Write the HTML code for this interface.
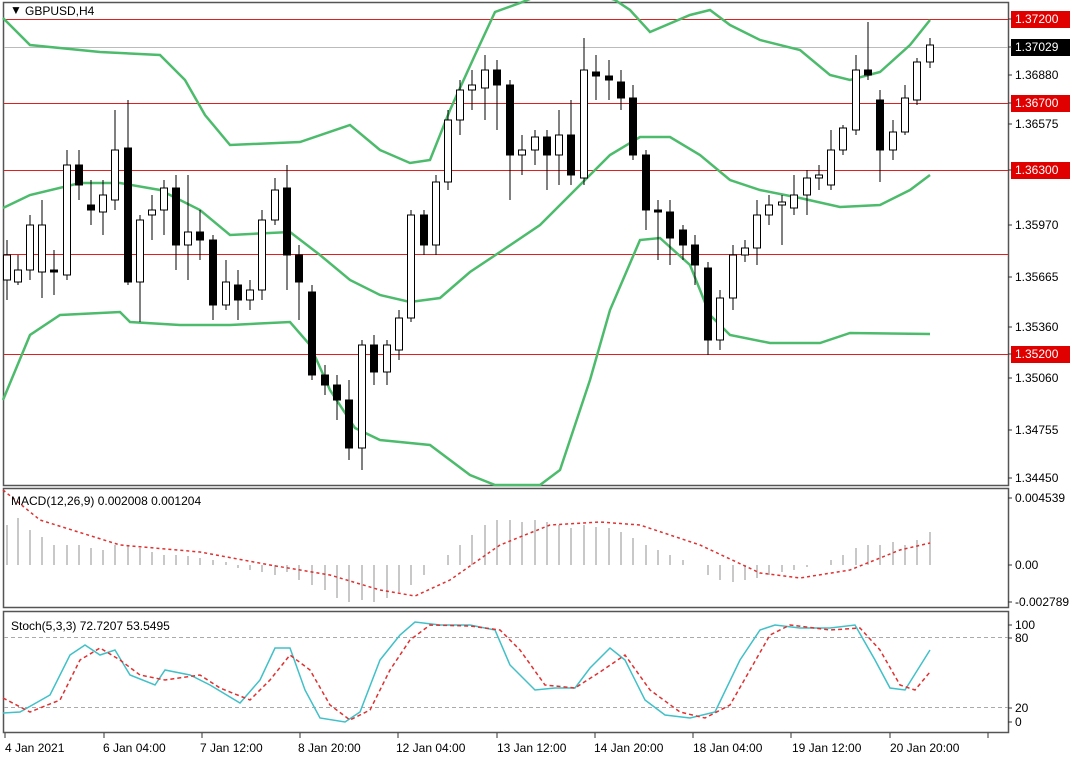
<!DOCTYPE html>
<html><head><meta charset="utf-8"><style>
html,body{margin:0;padding:0;background:#fff;width:1079px;height:762px;overflow:hidden}
svg text{font-family:"Liberation Sans",sans-serif;font-size:12px}
</style></head><body>
<svg id="s" width="1079" height="762" xmlns="http://www.w3.org/2000/svg">
<rect x="0" y="0" width="1079" height="762" fill="#fff"/>
<!-- panels -->
<rect x="3.5" y="2.5" width="1005" height="483" fill="none" stroke="#555" stroke-width="1.5"/>
<rect x="3.5" y="488.5" width="1005" height="119" fill="none" stroke="#555" stroke-width="1.5"/>
<rect x="3.5" y="611.5" width="1005" height="121" fill="none" stroke="#555" stroke-width="1.5"/>
<!-- hlines -->
<g stroke="#e02020" stroke-width="1">
<line x1="4" y1="19.5" x2="1008" y2="19.5"/><line x1="4" y1="103.5" x2="1008" y2="103.5"/>
<line x1="4" y1="170.5" x2="1008" y2="170.5"/><line x1="4" y1="254.5" x2="1008" y2="254.5"/>
<line x1="4" y1="354.5" x2="1008" y2="354.5"/></g>
<line x1="4" y1="47.5" x2="1008" y2="47.5" stroke="#bbb"/>
<g stroke="#aaa" stroke-dasharray="4,3"><line x1="4" y1="637.5" x2="1008" y2="637.5"/><line x1="4" y1="707.5" x2="1008" y2="707.5"/></g>
<g id="bb" fill="none" stroke="#4cbb6c" stroke-width="2.5">
<polyline points="3,18 30,45 100,52 160,55 185,80 205,115 230,145 300,142 350,125 380,150 410,163 430,160 450,110 475,55 495,12 520,3 540,-5 600,-5 615,0 630,10 650,32 690,15 710,10 730,25 760,40 800,50 830,75 850,80 880,72 910,45 930,20"/>
<polyline points="3,208 30,195 80,183 120,183 160,190 200,210 230,235 290,232 320,255 350,280 380,295 410,302 440,298 470,272 500,252 540,225 580,185 610,155 640,137 670,137 700,155 730,180 760,190 800,198 840,207 880,205 910,190 930,175"/>
<polyline points="3,400 30,335 60,315 120,312 130,322 180,325 230,325 290,322 310,345 330,390 355,428 380,440 430,445 470,475 495,485 540,485 560,470 590,380 610,310 640,240 660,238 690,265 710,315 730,335 770,343 820,343 850,333 930,334"/>
</g>
<g id="candles"></g>
<g id="hist" stroke="#c8c8c8" stroke-width="2"></g>
<polyline fill="none" stroke="#e03030" stroke-width="1.5" stroke-dasharray="3,3" points="3,490 40,520 120,545 200,552 270,565 330,575 380,590 415,596 450,580 500,545 550,525 600,522 640,525 700,545 760,573 800,578 850,570 900,550 930,543"/>
<polyline fill="none" stroke="#40c0c8" stroke-width="1.5" points="3,713 20,712 50,695 70,655 85,645 100,655 115,650 130,675 155,685 165,670 190,675 210,685 240,703 260,680 275,648 290,648 305,690 320,718 345,722 360,712 380,660 400,635 415,622 440,625 470,625 495,630 510,665 535,690 555,688 575,688 590,668 610,648 625,660 645,700 665,715 690,718 715,712 740,660 760,630 775,625 800,628 830,628 855,625 875,660 890,688 905,690 930,650"/>
<polyline fill="none" stroke="#e03030" stroke-width="1.5" stroke-dasharray="4,3" points="3,698 30,712 60,700 80,660 100,648 120,660 140,675 165,680 200,675 220,688 250,700 270,680 290,655 310,670 330,705 350,720 370,710 390,670 410,640 430,625 470,626 500,630 520,650 545,685 575,688 600,672 625,655 650,690 680,712 705,718 730,705 750,670 770,635 790,625 830,630 860,628 880,650 900,685 915,690 930,672"/>
<!-- labels -->
<text x="10" y="14" font-size="11">&#9660;</text>
<text x="25" y="15">GBPUSD,H4</text>
<text x="11" y="505">MACD(12,26,9) 0.002008 0.001204</text>
<text x="11" y="630">Stoch(5,3,3) 72.7207 53.5495</text>
<g id="ax"></g>
<g font-size="12">
<text x="5" y="752">4 Jan 2021</text><text x="103" y="752">6 Jan 04:00</text><text x="200" y="752">7 Jan 12:00</text><text x="298" y="752">8 Jan 20:00</text><text x="396" y="752">12 Jan 04:00</text><text x="497" y="752">13 Jan 12:00</text><text x="594" y="752">14 Jan 20:00</text><text x="693" y="752">18 Jan 04:00</text><text x="792" y="752">19 Jan 12:00</text><text x="890" y="752">20 Jan 20:00</text>
</g>
<g stroke="#333"><line x1="5" y1="733" x2="5" y2="738"/><line x1="104" y1="733" x2="104" y2="738"/><line x1="202" y1="733" x2="202" y2="738"/><line x1="300" y1="733" x2="300" y2="738"/><line x1="398" y1="733" x2="398" y2="738"/><line x1="497" y1="733" x2="497" y2="738"/><line x1="595" y1="733" x2="595" y2="738"/><line x1="693" y1="733" x2="693" y2="738"/><line x1="791" y1="733" x2="791" y2="738"/><line x1="890" y1="733" x2="890" y2="738"/><line x1="988" y1="733" x2="988" y2="738"/></g>
</svg>
<script>
var NS="http://www.w3.org/2000/svg";
function el(p,t,a,txt){var e=document.createElementNS(NS,t);for(var k in a)e.setAttribute(k,a[k]);if(txt!==undefined)e.textContent=txt;p.appendChild(e);return e;}
var c=[[7,280,255,240,300],[18,282,270,255,285],[30,270,225,215,280],[42,272,225,200,298],[54,270,272,250,295],[67,275,165,150,280],[79,165,185,150,200],[91,205,210,180,225],[103,212,195,180,235],[115,200,150,110,210],[128,148,282,100,285],[140,282,220,215,322],[152,215,210,195,240],[164,210,188,180,235],[176,188,245,175,270],[188,245,232,175,280],[200,232,240,210,260],[213,240,305,235,320],[226,305,282,260,310],[238,285,300,270,320],[250,300,290,280,310],[262,290,220,210,300],[275,220,190,178,225],[287,188,255,165,290],[299,255,282,245,320],[312,292,375,285,380],[325,375,385,365,395],[337,385,400,375,420],[349,400,448,380,460],[362,448,345,340,470],[374,345,372,335,385],[387,372,345,340,385],[399,350,318,310,360],[411,318,215,210,322],[424,215,245,210,255],[436,245,182,175,255],[448,182,120,110,190],[460,120,90,80,135],[472,90,85,70,110],[485,88,70,55,120],[497,70,85,60,130],[510,85,155,80,200],[522,155,150,135,175],[535,150,137,130,165],[547,137,155,130,190],[559,155,135,110,185],[571,135,175,100,185],[584,178,70,38,185],[596,72,76,55,100],[609,76,80,60,100],[621,82,98,70,110],[633,98,155,85,160],[646,155,210,150,230],[658,210,212,200,260],[670,212,238,200,265],[683,230,245,225,260],[695,245,265,235,285],[708,268,340,262,355],[720,340,298,290,350],[733,298,255,245,310],[745,255,248,240,262],[757,248,215,200,265],[769,215,205,195,225],[782,205,202,195,245],[794,208,195,175,215],[807,195,178,170,215],[819,178,175,165,190],[831,185,150,130,190],[843,150,128,125,155],[856,130,70,55,135],[868,70,75,22,80],[880,100,150,90,182],[893,150,132,120,160],[905,132,98,85,135],[917,100,62,58,105],[930,62,45,38,68]];
var g=document.getElementById("candles");
c.forEach(function(d){var x=d[0],o=d[1],cl=d[2],top=Math.min(o,cl),h=Math.max(2,Math.abs(o-cl));var bull=cl<o;
el(g,"line",{x1:x,y1:d[3],x2:x,y2:d[4],stroke:"#000","stroke-width":1});
el(g,"rect",{x:x-3.5,y:top,width:7,height:h,fill:bull?"#fff":"#000",stroke:"#000","stroke-width":1});});
// histogram
var hv=[[7,525],[18,518],[30,530],[42,537],[54,545],[67,545],[79,545],[91,548],[103,550],[115,545],[128,545],[140,548],[152,552],[164,555],[176,555],[188,556],[200,558],[213,560],[226,562],[238,568],[250,570],[262,572],[275,575],[287,572],[299,580],[312,585],[325,590],[337,598],[349,602],[362,600],[374,602],[387,598],[399,592],[411,585],[424,575],[436,565],[448,555],[460,545],[472,535],[485,525],[497,520],[510,520],[522,522],[535,520],[547,522],[559,525],[571,528],[584,525],[596,527],[609,528],[621,532],[633,538],[646,545],[658,550],[670,555],[683,560],[695,565],[708,575],[720,580],[733,582],[745,580],[757,578],[769,575],[782,572],[794,570],[807,567],[819,565],[831,560],[843,555],[856,548],[868,545],[880,545],[893,542],[905,545],[917,540],[930,532]];
var hg=document.getElementById("hist");
hv.forEach(function(d){el(hg,"line",{x1:d[0],y1:565,x2:d[0],y2:d[1]});});
// axis
var ax=document.getElementById("ax");
[["1.37200",19,"#e00000","#fff"],["1.37029",47,"#000","#fff"],["1.36880",75],["1.36700",103,"#e00000","#fff"],["1.36575",124],["1.36300",170,"#e00000","#fff"],["1.35970",225],["1.35665",277],["1.35360",327],["1.35200",354,"#e00000","#fff"],["1.35060",378],["1.34755",430],["1.34450",478],["0.004539",498],["0.00",565],["-0.002789",602],["100",625],["80",638],["20",708],["0",722]].forEach(function(d){
if(d[2]){el(ax,"rect",{x:1011,y:d[1]-8,width:59,height:17,fill:d[2]});}
el(ax,"line",{x1:1008,y1:d[1],x2:1012,y2:d[1],stroke:"#333"});
el(ax,"text",{x:1015,y:d[1]+4,fill:d[3]||"#000"},d[0]);});
</script>
</body></html>
